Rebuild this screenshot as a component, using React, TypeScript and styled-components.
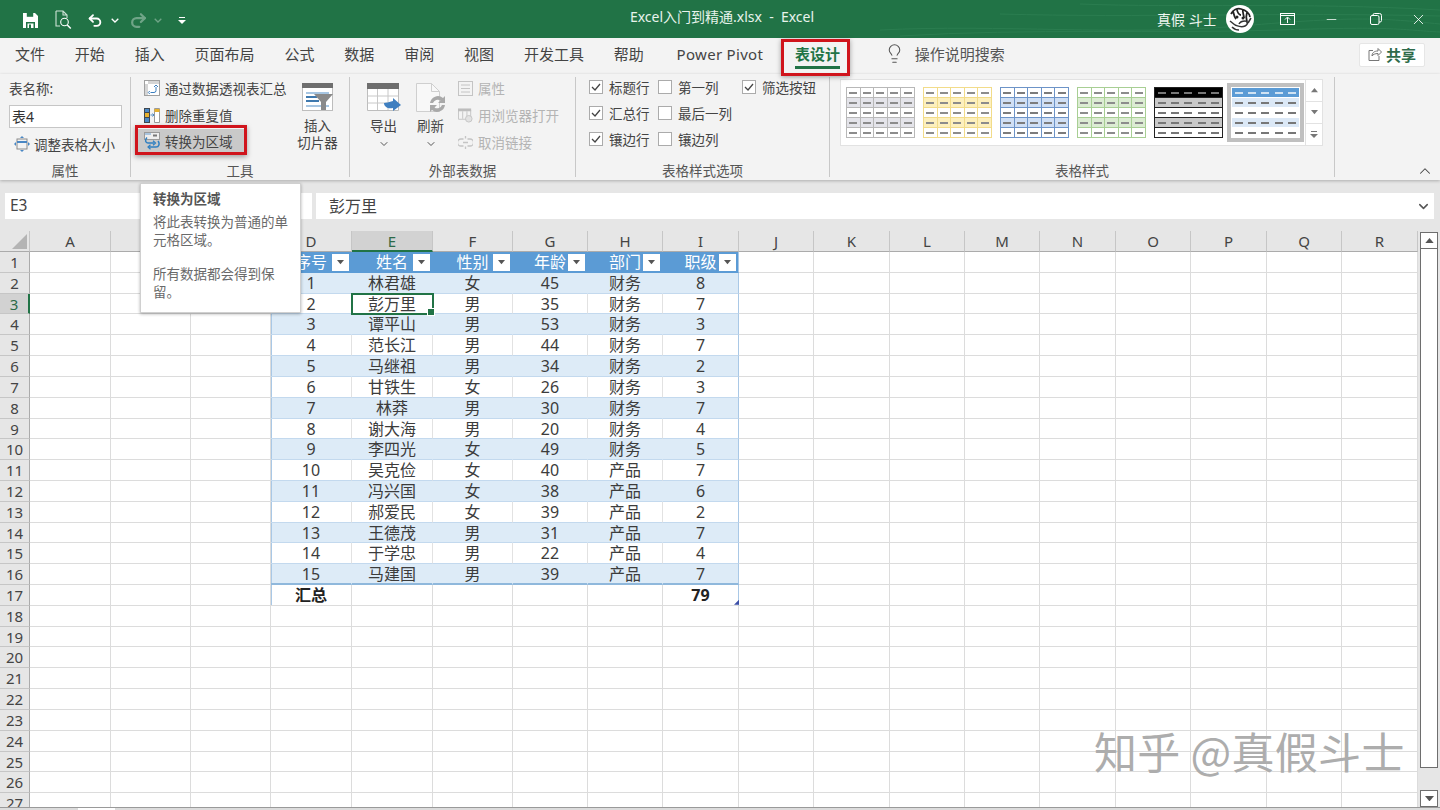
import React from "react";
import styled, { createGlobalStyle } from "styled-components";
import { Lightbulb, Undo2, Redo2, X, Minus, ChevronDown, ChevronUp } from "lucide-react";

const GlobalStyle = createGlobalStyle`
  html, body { margin: 0; padding: 0; background: #fff; }
  body { font-family: "Noto Sans", "Noto Sans CJK SC", sans-serif; color: #444; }
  * { box-sizing: border-box; }
`;

const GREEN = "#217346";
const RED = "#d0141c";

const Page = styled.div`
  position: relative;
  width: 1440px;
  height: 810px;
  overflow: hidden;
  display: flex;
  flex-direction: column;
`;

/* ---------- title bar ---------- */
const TitleBar = styled.header`
  position: relative;
  height: 38px;
  flex: none;
  background: ${GREEN};
  display: grid;
  grid-template-columns: 1fr auto 1fr;
  align-items: center;
  color: #fff;
`;
const TitleLines = styled.svg`
  position: absolute;
  right: 0;
  top: 0;
`;
const Qat = styled.div`
  display: flex;
  align-items: center;
  padding-left: 22px;
  padding-top: 2px;
  position: relative;
`;
const QatSlot = styled.span<{ $w: number; $dim?: boolean; $ml?: number }>`
  width: ${(p) => p.$w}px;
  margin-left: ${(p) => p.$ml ?? 0}px;
  display: flex;
  align-items: center;
  justify-content: center;
  opacity: ${(p) => (p.$dim ? 0.35 : 1)};
`;
const Title = styled.div`
  font-size: 14px;
  color: #e8f3ec;
  white-space: pre;
  position: relative;
  padding-bottom: 6px;
  margin-left: 4px;
`;
const WinArea = styled.div`
  display: flex;
  justify-content: flex-end;
  align-items: center;
  position: relative;
`;
const UserName = styled.span`
  font-size: 14px;
  color: #eef6f0;
  width: 69px;
  white-space: pre;
`;
const WinSlot = styled.span<{ $w: number }>`
  width: ${(p) => p.$w}px;
  display: flex;
  justify-content: center;
  align-items: center;
`;

/* ---------- tabs ---------- */
const TabBar = styled.nav`
  height: 36px;
  flex: none;
  background: #f3f3f3;
  display: flex;
  align-items: stretch;
  gap: 29.85px;
  padding-left: 15px;
`;
const Tab = styled.div<{ $active?: boolean; $latin?: boolean }>`
  position: relative;
  font-size: 15px;
  font-weight: ${(p) => (p.$active ? 700 : 400)};
  color: ${(p) => (p.$active ? GREEN : "#444")};
  display: flex;
  align-items: center;
  padding-bottom: 5px;
  letter-spacing: ${(p) => (p.$latin ? "0.3px" : "0")};
  margin-left: ${(p) => (p.$latin ? "3px" : p.$active ? "2px" : "0")};
  ${(p) =>
    p.$active
      ? `
    &::before { content: ""; position: absolute; left: 0; right: 0; bottom: 5px; height: 3px; background: ${GREEN}; }
    &::after { content: ""; position: absolute; left: -14px; right: -10px; top: 1px; bottom: -2px; border: 3px solid ${RED}; box-shadow: 0 1px 5px rgba(0,0,0,.35); z-index: 3; }
  `
      : ""}
`;
const Search = styled.div`
  display: flex;
  align-items: center;
  gap: 10px;
  font-size: 15px;
  color: #555;
  margin-left: 14px;
  padding-bottom: 5px;
`;
const ShareButton = styled.div`
  margin: 5px 15px 7px auto;
  width: 66px;
  background: #fff;
  border: 1px solid #e6e6e6;
  border-radius: 2px;
  display: flex;
  align-items: center;
  justify-content: center;
  gap: 4px;
  font-size: 15px;
  font-weight: 700;
  color: #2f6b4b;
  padding-bottom: 2px;
`;

/* ---------- ribbon ---------- */
const Ribbon = styled.section`
  position: relative;
  height: 106px;
  flex: none;
  background: #f3f3f3;
  display: flex;
  box-shadow: 0 1px 3px rgba(0, 0, 0, 0.25);
  z-index: 2;
`;
const Group = styled.div<{ $w: number }>`
  width: ${(p) => p.$w}px;
  flex: none;
  display: flex;
  flex-direction: column;
  position: relative;
  &::after {
    content: "";
    position: absolute;
    right: 0;
    top: 3px;
    bottom: 3px;
    width: 1px;
    background: #c8c8c8;
  }
`;
const GroupBody = styled.div<{ $pl?: number; $pt?: number }>`
  flex: 1;
  display: flex;
  min-height: 0;
  padding-left: ${(p) => p.$pl ?? 0}px;
  padding-top: ${(p) => p.$pt ?? 0}px;
`;
const GroupLabel = styled.div`
  height: 18px;
  flex: none;
  font-size: 13.5px;
  line-height: 18px;
  text-align: center;
  color: #555;
  padding-right: 1px;
`;
const PropsColumn = styled.div`
  display: flex;
  flex-direction: column;
  font-size: 13.5px;
  color: #444;
  padding-left: 9px;
`;
const FieldLabel = styled.div`
  height: 31px;
  line-height: 30px;
`;
const NameInput = styled.div`
  width: 113px;
  height: 23px;
  background: #fff;
  border: 1px solid #c6c6c6;
  font-size: 14px;
  line-height: 21px;
  padding-left: 2px;
  color: #333;
`;
const SmallRow = styled.div<{ $disabled?: boolean; $boxed?: boolean }>`
  position: relative;
  height: 27px;
  display: flex;
  align-items: center;
  gap: 5px;
  font-size: 13.5px;
  white-space: nowrap;
  color: ${(p) => (p.$disabled ? "#b4b4b4" : "#444")};
  svg { flex: none; }
  ${(p) =>
    p.$boxed
      ? `
    background: #c9c9c9;
    margin-left: -9px;
    padding-left: 9px;
    width: 112px;
    height: 25px;
    &::after { content: ""; position: absolute; inset: -3.5px 0 -1.5px 0; border: 3px solid ${RED}; box-shadow: 0 2px 5px rgba(0,0,0,.35); }
  `
      : ""}
`;
const ResizeRow = styled(SmallRow)`
  margin-left: 5px;
  margin-top: 2.5px;
  gap: 4px;
`;
const ToolColumn = styled.div<{ $w: number; $ml?: number }>`
  width: ${(p) => p.$w}px;
  margin-left: ${(p) => p.$ml ?? 0}px;
  flex: none;
  display: flex;
  flex-direction: column;
`;
const LargeButton = styled.div`
  width: 47px;
  flex: none;
  display: flex;
  flex-direction: column;
  align-items: center;
  padding-top: 8.5px;
  font-size: 13.5px;
  line-height: 17px;
  text-align: center;
  color: #444;
  white-space: pre-line;
`;
const LargeIcon = styled.div`
  height: 34.5px;
  display: flex;
  align-items: flex-start;
`;
const MoreChevron = styled(ChevronDown)`
  margin-top: 3px;
`;
const CheckGrid = styled.div`
  display: grid;
  grid-template-columns: 69px 84px 80px;
  grid-auto-rows: 26px;
  padding-left: 13px;
`;
const CheckItem = styled.div`
  display: flex;
  align-items: center;
  gap: 6px;
  font-size: 13.5px;
  color: #444;
  white-space: nowrap;
`;
const CheckBox = styled.span`
  width: 14px;
  height: 14px;
  background: #fff;
  border: 1px solid #ababab;
  display: flex;
  align-items: center;
  justify-content: center;
  flex: none;
`;
const Gallery = styled.div`
  margin: 5px 0 0 10px;
  width: 466px;
  height: 67px;
  background: #fff;
  border: 1px solid #e2e2e2;
  display: flex;
  align-items: center;
  gap: 8px;
  padding-left: 5px;
`;
const Frame = styled.div<{ $selected?: boolean }>`
  flex: none;
  padding: ${(p) => (p.$selected ? "4px" : "0")};
  margin-left: ${(p) => (p.$selected ? "-4px" : "0")};
  background: ${(p) => (p.$selected ? "#c0c0c0" : "transparent")};
`;
const Thumb = styled.div<{ $line: string; $vline: boolean }>`
  width: 69px;
  height: 51px;
  display: grid;
  grid-template-columns: repeat(5, 1fr);
  grid-template-rows: repeat(5, 1fr);
  border: 1px solid ${(p) => p.$line};
  background: ${(p) => p.$line};
  gap: ${(p) => (p.$vline ? "1px" : "1px 0")};
`;
const ThumbCell = styled.span<{ $bg: string }>`
  background: ${(p) => p.$bg};
  display: flex;
  align-items: center;
  justify-content: center;
`;
const Dash = styled.i<{ $c: string }>`
  display: block;
  width: 8px;
  height: 2px;
  background: ${(p) => p.$c};
`;
const GalleryScroll = styled.div`
  display: flex;
  flex-direction: column;
  margin: 5px 0 0 0;
  width: 17px;
  height: 67px;
  flex: none;
`;
const ScrollStep = styled.div`
  flex: 1;
  background: #fff;
  border: 1px solid #e2e2e2;
  border-left: none;
  margin-top: -1px;
  display: flex;
  align-items: center;
  justify-content: center;
  &:first-child { margin-top: 0; }
`;
const Collapse = styled.div`
  flex: 1;
  display: flex;
  justify-content: flex-end;
  align-items: flex-end;
  padding: 0 6px 0 0;
`;

/* ---------- formula bar ---------- */
const FormulaBar = styled.div`
  height: 51px;
  flex: none;
  background: #e6e6e6;
  display: flex;
  align-items: center;
  padding: 1px 6px 0 5px;
  gap: 4px;
`;
const NameBox = styled.div`
  width: 307px;
  height: 26px;
  background: #fff;
  font-size: 15.5px;
  line-height: 25px;
  padding-left: 5px;
  color: #444;
`;
const FormulaInput = styled.div`
  flex: 1;
  height: 26px;
  background: #fff;
  font-size: 16px;
  line-height: 25px;
  padding: 0 3px 0 13px;
  color: #444;
  display: flex;
  justify-content: space-between;
  align-items: center;
`;

/* ---------- sheet ---------- */
const SheetWrap = styled.div`
  height: 576px;
  flex: none;
  display: flex;
  background: #fff;
  overflow: hidden;
`;
const SheetGrid = styled.div`
  display: grid;
  grid-template-columns: 30px 81px 80px 80px 81px 81px 80px 75px 75px 76px 75px 76px 75px 75px 76px 75px 76px 75px 76px;
  grid-template-rows: 21px repeat(27, 20.82px);
  width: 1418px;
  flex: none;
`;
const Corner = styled.div`
  position: relative;
  background: #e6e6e6;
  border-right: 1px solid #c6c6c6;
  border-bottom: 1px solid #ababab;
  &::after {
    content: "";
    position: absolute;
    right: 2px;
    bottom: 2px;
    width: 15px;
    height: 15px;
    background: #b4b4b4;
    clip-path: polygon(100% 0, 100% 100%, 0 100%);
  }
`;
const ColHead = styled.div<{ $on?: boolean }>`
  background: ${(p) => (p.$on ? "#d2d2d2" : "#e6e6e6")};
  border-right: 1px solid #c6c6c6;
  border-bottom: ${(p) => (p.$on ? `2px solid ${GREEN}` : "1px solid #ababab")};
  font-size: 15px;
  line-height: 21px;
  text-align: center;
  color: ${(p) => (p.$on ? "#2c6a48" : "#444")};
`;
const RowHead = styled.div<{ $on?: boolean }>`
  background: ${(p) => (p.$on ? "#d2d2d2" : "#e6e6e6")};
  border-right: ${(p) => (p.$on ? `2px solid ${GREEN}` : "1px solid #ababab")};
  border-bottom: 1px solid #c6c6c6;
  font-size: 15px;
  line-height: 20px;
  text-align: center;
  color: ${(p) => (p.$on ? "#2c6a48" : "#444")};
`;
const Cell = styled.div<{ $bg?: string; $lineR?: string; $lineB?: string; $lineL?: string; $bold?: boolean; $head?: boolean; $sel?: boolean; $thick?: boolean }>`
  position: relative;
  background: ${(p) => p.$bg ?? "#fff"};
  border-right: 1px solid ${(p) => p.$lineR ?? "#dcdcdc"};
  border-bottom: ${(p) => (p.$thick ? 2 : 1)}px solid ${(p) => p.$lineB ?? "#dcdcdc"};
  ${(p) => (p.$lineL ? `box-shadow: inset 1px 0 0 ${p.$lineL};` : "")}
  font-size: 16px;
  font-weight: ${(p) => (p.$bold ? 700 : 400)};
  color: ${(p) => (p.$head ? "#fff" : p.$bold ? "#222" : "#3c3c3c")};
  text-align: center;
  line-height: 20px;
  white-space: nowrap;
  ${(p) =>
    p.$sel
      ? `
    outline: 2px solid ${GREEN};
    outline-offset: -1px;
    z-index: 1;
    &::after { content: ""; position: absolute; right: -3px; bottom: -3px; width: 6px; height: 6px; background: ${GREEN}; border: 1px solid #fff; }
  `
      : ""}
`;
const FilterButton = styled.span`
  position: absolute;
  right: 2px;
  top: 2px;
  width: 17px;
  height: 17px;
  background: #fff;
  display: flex;
  align-items: center;
  justify-content: center;
`;
const ResizeHandle = styled.span`
  position: absolute;
  right: -1px;
  bottom: 0;
  width: 5px;
  height: 5px;
  background: #3c4fa8;
  clip-path: polygon(100% 0, 100% 100%, 0 100%);
`;

/* ---------- scrollbars ---------- */
const VScroll = styled.div`
  flex: 1;
  background: #e6e6e6;
  display: flex;
  flex-direction: column;
  padding: 1px 2px 0;
`;
const VScrollButton = styled.div`
  height: 17px;
  flex: none;
  background: #fff;
  border: 1px solid #6e6e6e;
  display: flex;
  align-items: center;
  justify-content: center;
`;
const VThumb = styled.div`
  height: 520px;
  flex: none;
  margin-top: -1px;
  background: #fff;
  border: 1px solid #6e6e6e;
`;
const VGap = styled.div`
  flex: 1;
`;
const BottomStrip = styled.div`
  flex: 1;
  display: flex;
  background: #dcdcdc;
  border-top: 1px solid #9a9a9a;
`;
const StripGap = styled.div`
  width: 37px;
  margin-left: 78px;
  background: #fff;
`;

/* ---------- overlays ---------- */
const Tooltip = styled.aside`
  position: absolute;
  left: 140px;
  top: 183px;
  width: 161px;
  height: 130px;
  background: #fff;
  border: 1px solid #d0d0d0;
  box-shadow: 0 1px 3px rgba(0, 0, 0, 0.3);
  padding: 6px 8px 0 12px;
  z-index: 5;
`;
const TooltipTitle = styled.div`
  font-size: 13.5px;
  font-weight: 700;
  color: #555;
  line-height: 18px;
  margin-bottom: 5px;
`;
const TooltipText = styled.p`
  margin: 0 0 16px;
  font-size: 13.5px;
  line-height: 18px;
  color: #6a6a6a;
`;
const Watermark = styled.div`
  position: absolute;
  left: 1094px;
  top: 721px;
  font-size: 43px;
  line-height: 58px;
  letter-spacing: 0.3px;
  color: #adadad;
  white-space: pre;
  z-index: 4;
  font-family: "Noto Sans CJK SC", sans-serif;
`;

/* ---------- icons ---------- */
const Tri = ({ c = "#555", s = 7 }: { c?: string; s?: number }) => (
  <svg width={s} height={s * 0.6} viewBox="0 0 10 6">
    <path d="M0 0h10L5 6z" fill={c} />
  </svg>
);
const TriUp = ({ c = "#555", s = 7 }: { c?: string; s?: number }) => (
  <svg width={s} height={s * 0.6} viewBox="0 0 10 6">
    <path d="M0 6h10L5 0z" fill={c} />
  </svg>
);
const SaveIcon = () => (
  <svg width="15" height="15" viewBox="0 0 15 15">
    <path d="M0 0h12l3 3v12H0z" fill="#fff" />
    <path d="M3.8 0h6.4v3.8H3.8z" fill={GREEN} />
    <path d="M3 9h9v6H3z" fill={GREEN} />
    <path d="M4.5 10.5h6V15h-6z" fill="#fff" />
    <path d="M6 11.5h2V15H6z" fill={GREEN} />
  </svg>
);
const PreviewIcon = () => (
  <svg width="18" height="20" viewBox="0 0 18 20" fill="none" stroke="#cfe3d7" strokeWidth="1.1">
    <path d="M1 1h7l4 4v3M8 1v4h4M1 1v15h4" />
    <circle cx="9.5" cy="12" r="3.8" stroke="#fff" />
    <path d="M12.3 15l3.500 3.500" stroke="#fff" strokeWidth="1.5" />
  </svg>
);
const MiniChevron = ({ dim }: { dim?: boolean }) => (
  <svg width="8" height="5" viewBox="0 0 8 5" fill="none" stroke="#fff" strokeWidth="1.3" opacity={dim ? 0.35 : 1}>
    <path d="M.7.7L4 4l3.300-3.300" />
  </svg>
);
const CustomizeIcon = ({ c = "#fff" }: { c?: string }) => (
  <svg width="8" height="7" viewBox="0 0 8 7">
    <path d="M1 0h6v1H1zM0 3h8L4 7z" fill={c} />
  </svg>
);
const Avatar = () => (
  <svg width="28" height="28" viewBox="0 0 28 28" fill="none">
    <circle cx="14" cy="14" r="14" fill="#fff" />
    <path d="M5 9c2-4 6-6 10-5s8 3 9 8M7 6c1 3 1 6 3 8M11 4c0 3 2 6 4 6M17 4c-1 3 1 6 1 9M21 7c-1 3-1 6 0 10" stroke="#222" strokeWidth="1.8" />
    <circle cx="11" cy="12" r="1.5" fill="#222" />
    <circle cx="17" cy="13" r="1.5" fill="#222" />
    <path d="M4 16l5 4M9 20c3 1 6 3 10 1s2-5 0-5-5 1-6 3M6 22c2 2 4 3 7 3M22 18l3-5" stroke="#333" strokeWidth="1.5" />
  </svg>
);
const RibbonDisplayIcon = () => (
  <svg width="15" height="12" viewBox="0 0 15 12" fill="none" stroke="#fff" strokeWidth="1">
    <rect x=".5" y=".5" width="14" height="11" />
    <path d="M.5 2.500h14M7.500 10V4.500M5 6.500l2.500-2.500L10 6.500" />
  </svg>
);
const RestoreIcon = () => (
  <svg width="12" height="12" viewBox="0 0 12 12" fill="none" stroke="#fff" strokeWidth="1">
    <rect x=".5" y="2.5" width="8.5" height="9" rx="1.5" />
    <path d="M3 2.500V2A1.500 1.500 0 0 1 4.500.5h5A2 2 0 0 1 11.500 2.500v5A1.500 1.500 0 0 1 10 9H9" />
  </svg>
);
const ShareIcon = () => (
  <svg width="14" height="14" viewBox="0 0 14 14" fill="none" stroke="#777" strokeWidth="1">
    <path d="M5 3.500H1v10h10V9" />
    <path d="M4 9c0-3 2-5 6-5V1.500L13.500 5 10 8.500V6.500c-3 0-5 1-6 2.500z" />
  </svg>
);
const ResizeTableIcon = () => (
  <svg width="16" height="16" viewBox="0 0 16 16" fill="none">
    <rect x="3" y="3" width="10" height="10" stroke="#8a8a8a" />
    <path d="M3 6h10" stroke="#4a87c4" strokeWidth="2" />
    <path d="M8 0l2 2H6zM8 16l2-2H6zM0 8l2-2v4zM16 8l-2-2v4z" fill="#4a87c4" />
  </svg>
);
const PivotSummaryIcon = () => (
  <svg width="16" height="16" viewBox="0 0 16 16" fill="none">
    <rect x=".5" y=".5" width="15" height="15" fill="#fff" stroke="#a0a0a0" />
    <path d="M1 4h3v11H1zM4 1h11v3H4z" fill="#d5d5d5" />
    <path d="M12 7v3.500a2 2 0 0 1-2 2H6.500M5.800 11l-1.500 1.500 1.500 1.500M10 7l2-2 2 2" stroke="#3a7ebf" />
  </svg>
);
const DedupeIcon = () => (
  <svg width="16" height="15" viewBox="0 0 16 15">
    <path d="M0 0h6v15H0z" fill="#3f4850" />
    <path d="M1 5h4v4H1z" fill="#e7b12f" />
    <path d="M1 10h4v4H1z" fill="#4a87c4" />
    <path d="M1 1h4v3H1z" fill="#4a87c4" />
    <path d="M6.500 7h3M8.500 5.500l1.500 1.500-1.500 1.500" stroke="#4a87c4" fill="none" />
    <path d="M10.500.5h5v14h-5z" fill="#fff" stroke="#9a9a9a" />
    <path d="M10.500 1h5v3h-5z" fill="#e7b12f" />
  </svg>
);
const ConvertIcon = () => (
  <svg width="16" height="18" viewBox="0 0 16 18" fill="none">
    <rect x=".5" y=".5" width="15" height="7" fill="#eeeeee" stroke="#9a9a9a" />
    <path d="M9 2.500h4v2H9z" fill="#777" />
    <path d="M1 1h6v2H1z" fill="#a9c4de" />
    <path d="M3 5.500C.5 8 1.500 11 4 11h6" stroke="#2f7fc1" strokeWidth="1.5" />
    <path d="M9 8.800l2.500 2.200L9 13.200" stroke="#2f7fc1" strokeWidth="1.2" />
    <path d="M14 9c2 2.500 1 6-2 6H5" stroke="#2f7fc1" strokeWidth="1.5" />
    <path d="M6.500 12.800L4 15l2.500 2.200" stroke="#2f7fc1" strokeWidth="1.2" />
  </svg>
);
const SlicerIcon = () => (
  <svg width="31" height="28" viewBox="0 0 31 28">
    <rect x=".5" y=".5" width="30" height="27" fill="#fff" stroke="#bdbdbd" />
    <path d="M0 0h31v5H0z" fill="#6e6e6e" />
    <path d="M4 9h23v2H4z" fill="#a7c6e2" />
    <path d="M4 13h11v2H4zM4 17h13v2H4z" fill="#3f79ae" />
    <path d="M4 22h23v2H4z" fill="#a7c6e2" />
    <path d="M12 11h19l-7 8v8h-5v-8z" fill="#8a8a8a" />
  </svg>
);
const ExportIcon = () => (
  <svg width="34" height="29" viewBox="0 0 34 29">
    <path d="M.5.5h31v27H.5z" fill="#fff" stroke="#bdbdbd" />
    <path d="M0 0h32v6H0z" fill="#6e6e6e" />
    <path d="M.5 13h31M.5 20h31M10.500 6v21M21 6v21" stroke="#c8c8c8" />
    <path d="M17 20c0 4 4 6 9 5v3l8-6-8-7v3c-4 1-7 2-9 2z" fill="#3f7fc0" />
  </svg>
);
const RefreshIcon = () => (
  <svg width="31" height="30" viewBox="0 0 31 30" fill="none">
    <path d="M1.500.5h15l8 8v20h-23z" fill="#f8f8f8" stroke="#cfcfcf" />
    <path d="M16.500.5v8h8" stroke="#cfcfcf" />
    <path d="M15 20a8 8 0 0 1 13-5l2-2v7h-7l2.500-2.500A5 5 0 0 0 18 20z M30 22a8 8 0 0 1-13 5l-2 2v-7h7l-2.500 2.500A5 5 0 0 0 27 22z" fill="#a9a9a9" />
  </svg>
);
const PropIcon = () => (
  <svg width="15" height="15" viewBox="0 0 15 15" fill="none" stroke="#c4c4c4">
    <rect x=".5" y=".5" width="14" height="14" />
    <path d="M3 4h9M3 7.500h9M3 11h9" />
  </svg>
);
const BrowserIcon = () => (
  <svg width="15" height="15" viewBox="0 0 16 15" fill="none" stroke="#c4c4c4">
    <path d="M.5 1.500h13v10H.5zM5 3v8M9.500 3v8" />
    <path d="M0 0h14v3H0z" fill="#bdbdbd" stroke="none" />
    <circle cx="11.500" cy="11" r="3.500" fill="#e2e2e2" />
  </svg>
);
const UnlinkIcon = () => (
  <svg width="15" height="13" viewBox="0 0 15 13" fill="none" stroke="#c4c4c4" strokeWidth="1.3">
    <path d="M5.500 3H3a3.400 3.400 0 0 0 0 7h2.500M9.500 3H12a3.400 3.400 0 0 1 0 7H9.500M7.500 0v2.500M7.500 10.500V13M5 6.500h5" />
  </svg>
);
const Check = () => (
  <svg width="10" height="8" viewBox="0 0 10 8" fill="none" stroke="#444" strokeWidth="1.3">
    <path d="M1 4l3 3 5-6" />
  </svg>
);

/* ---------- data ---------- */
const TABS = ["文件", "开始", "插入", "页面布局", "公式", "数据", "审阅", "视图", "开发工具", "帮助"];
const COLS = "ABCDEFGHIJKLMNOPQR".split("");
const PEOPLE: [string, string, string, string, string, string][] = [
  ["1", "林君雄", "女", "45", "财务", "8"],
  ["2", "彭万里", "男", "35", "财务", "7"],
  ["3", "谭平山", "男", "53", "财务", "3"],
  ["4", "范长江", "男", "44", "财务", "7"],
  ["5", "马继祖", "男", "34", "财务", "2"],
  ["6", "甘铁生", "女", "26", "财务", "3"],
  ["7", "林莽", "男", "30", "财务", "7"],
  ["8", "谢大海", "男", "20", "财务", "4"],
  ["9", "李四光", "女", "49", "财务", "5"],
  ["10", "吴克俭", "女", "40", "产品", "7"],
  ["11", "冯兴国", "女", "38", "产品", "6"],
  ["12", "郝爱民", "女", "39", "产品", "2"],
  ["13", "王德茂", "男", "31", "产品", "7"],
  ["14", "于学忠", "男", "22", "产品", "4"],
  ["15", "马建国", "男", "39", "产品", "7"],
];
const HEADS = ["序号", "姓名", "性别", "年龄", "部门", "职级"];
const THUMBS = [
  { line: "#b8b8b8", head: "#fff", band: "#e4e4ea", dash: "#8c8c8c", vline: true },
  { line: "#f2dc8a", head: "#fff", band: "#fdf0bd", dash: "#8c8c8c", vline: true },
  { line: "#6d94c8", head: "#fff", band: "#cfdff5", dash: "#7c7c7c", vline: true },
  { line: "#a8cf94", head: "#fff", band: "#dcecd3", dash: "#8c8c8c", vline: true },
  { line: "#222", head: "#000", band: "#c9c9c9", dash: "#777", vline: false },
  { line: "#fff", head: "#5b9bd5", band: "#dbe8f6", dash: "#777", vline: false, selected: true },
];

function tableCell(row: number, colIndex: number) {
  const c = colIndex - 3;
  if (c < 0 || c > 5) return null;
  const lineL = c === 0 ? "#a9c8e6" : undefined;
  const edge = c === 5 ? "#a9c8e6" : undefined;
  if (row === 1) {
    return (
      <Cell key={colIndex} $bg="#5b9bd5" $lineR={edge ?? "#5b9bd5"} $lineB="#5b9bd5" $head>
        {HEADS[c]}
        <FilterButton>
          <Tri />
        </FilterButton>
      </Cell>
    );
  }
  if (row >= 2 && row <= 16) {
    const striped = row % 2 === 0;
    return (
      <Cell
        key={colIndex}
        $bg={striped ? "#ddebf7" : "#fff"}
        $lineR={edge ?? (striped ? "#ddebf7" : "#e2e2e2")}
        $lineB={row === 16 ? "#8fb8dc" : "#c3d9ee"}
        $thick={row === 16}
        $lineL={lineL}
        $sel={row === 3 && c === 1}
      >
        {PEOPLE[row - 2][c]}
      </Cell>
    );
  }
  if (row === 17) {
    return (
      <Cell key={colIndex} $lineR={edge} $lineL={lineL} $bold>
        {c === 0 ? "汇总" : c === 5 ? "79" : ""}
        {c === 5 && <ResizeHandle />}
      </Cell>
    );
  }
  return null;
}

export default function App() {
  const rows = Array.from({ length: 27 }, (_, i) => i + 1);
  return (
    <Page>
      <GlobalStyle />
      <TitleBar>
        <TitleLines width="560" height="38" viewBox="0 0 560 38" fill="none" stroke="#2b7d50" strokeWidth="1">
          <path d="M0 30C120 24 240 36 360 26S500 18 560 24" />
          <path d="M20 36C150 28 280 34 400 30S520 30 560 32" />
          <path d="M200 4C300 8 420 2 560 10" />
          <path d="M120 14C260 18 400 12 560 16" />
        </TitleLines>
        <Qat>
          <QatSlot $w={16}><SaveIcon /></QatSlot>
          <QatSlot $w={52}><PreviewIcon /></QatSlot>
          <QatSlot $w={16} $ml={-3}><Undo2 size={19} color="#fff" strokeWidth={2.8} /></QatSlot>
          <QatSlot $w={24}><MiniChevron /></QatSlot>
          <QatSlot $w={22} $dim><Redo2 size={19} color="#fff" strokeWidth={2.8} /></QatSlot>
          <QatSlot $w={17}><MiniChevron dim /></QatSlot>
          <QatSlot $w={32}><CustomizeIcon /></QatSlot>
        </Qat>
        <Title>{"Excel入门到精通.xlsx  -  Excel"}</Title>
        <WinArea>
          <UserName>{"真假 斗士"}</UserName>
          <Avatar />
          <WinSlot $w={66}><RibbonDisplayIcon /></WinSlot>
          <WinSlot $w={23}><Minus size={15} color="#fff" strokeWidth={1.2} /></WinSlot>
          <WinSlot $w={65}><RestoreIcon /></WinSlot>
          <WinSlot $w={20}><X size={17} color="#fff" strokeWidth={1.2} /></WinSlot>
          <WinSlot $w={12} />
        </WinArea>
      </TitleBar>

      <TabBar>
        {TABS.map((t) => (
          <Tab key={t}>{t}</Tab>
        ))}
        <Tab $latin>Power Pivot</Tab>
        <Tab $active>表设计</Tab>
        <Search>
          <Lightbulb size={21} color="#555" strokeWidth={1.2} />
          操作说明搜索
        </Search>
        <ShareButton>
          <ShareIcon />
          共享
        </ShareButton>
      </TabBar>

      <Ribbon>
        <Group $w={131}>
          <GroupBody>
            <PropsColumn>
              <FieldLabel>表名称:</FieldLabel>
              <NameInput>表4</NameInput>
              <ResizeRow>
                <ResizeTableIcon />
                调整表格大小
              </ResizeRow>
            </PropsColumn>
          </GroupBody>
          <GroupLabel>属性</GroupLabel>
        </Group>

        <Group $w={219}>
          <GroupBody $pl={13} $pt={0.5}>
            <ToolColumn $w={150}>
              <SmallRow><PivotSummaryIcon />通过数据透视表汇总</SmallRow>
              <SmallRow><DedupeIcon />删除重复值</SmallRow>
              <SmallRow $boxed><ConvertIcon />转换为区域</SmallRow>
            </ToolColumn>
            <LargeButton>
              <LargeIcon><SlicerIcon /></LargeIcon>
              {"插入\n切片器"}
            </LargeButton>
          </GroupBody>
          <GroupLabel>工具</GroupLabel>
        </Group>

        <Group $w={226}>
          <GroupBody $pl={10} $pt={0.5}>
            <LargeButton>
              <LargeIcon><ExportIcon /></LargeIcon>
              导出
              <MoreChevron size={12} color="#555" />
            </LargeButton>
            <LargeButton>
              <LargeIcon><RefreshIcon /></LargeIcon>
              刷新
              <MoreChevron size={12} color="#555" />
            </LargeButton>
            <ToolColumn $w={110} $ml={4}>
              <SmallRow $disabled><PropIcon />属性</SmallRow>
              <SmallRow $disabled><BrowserIcon />用浏览器打开</SmallRow>
              <SmallRow $disabled><UnlinkIcon />取消链接</SmallRow>
            </ToolColumn>
          </GroupBody>
          <GroupLabel>外部表数据</GroupLabel>
        </Group>

        <Group $w={254}>
          <GroupBody>
            <CheckGrid>
              <CheckItem><CheckBox><Check /></CheckBox>标题行</CheckItem>
              <CheckItem><CheckBox />第一列</CheckItem>
              <CheckItem><CheckBox><Check /></CheckBox>筛选按钮</CheckItem>
              <CheckItem><CheckBox><Check /></CheckBox>汇总行</CheckItem>
              <CheckItem><CheckBox />最后一列</CheckItem>
              <span />
              <CheckItem><CheckBox><Check /></CheckBox>镶边行</CheckItem>
              <CheckItem><CheckBox />镶边列</CheckItem>
            </CheckGrid>
          </GroupBody>
          <GroupLabel>表格样式选项</GroupLabel>
        </Group>

        <Group $w={505}>
          <GroupBody>
            <Gallery>
              {THUMBS.map((t) => (
                <Frame key={t.line + t.head} $selected={t.selected}>
                  <Thumb $line={t.line} $vline={t.vline}>
                    {Array.from({ length: 25 }, (_, i) => {
                      const r = Math.floor(i / 5);
                      const bg = r === 0 ? t.head : r % 2 === 1 ? t.band : "#fff";
                      const d = r === 0 && t.selected ? "#cfe2f3" : t.dash;
                      return (
                        <ThumbCell key={i} $bg={bg}>
                          <Dash $c={d} />
                        </ThumbCell>
                      );
                    })}
                  </Thumb>
                </Frame>
              ))}
            </Gallery>
            <GalleryScroll>
              <ScrollStep><TriUp c="#777" /></ScrollStep>
              <ScrollStep><Tri c="#777" /></ScrollStep>
              <ScrollStep><CustomizeIcon c="#777" /></ScrollStep>
            </GalleryScroll>
          </GroupBody>
          <GroupLabel>表格样式</GroupLabel>
        </Group>

        <Collapse>
          <ChevronUp size={18} color="#444" strokeWidth={1.4} />
        </Collapse>
      </Ribbon>

      <FormulaBar>
        <NameBox>E3</NameBox>
        <FormulaInput>
          彭万里
          <ChevronDown size={15} color="#555" strokeWidth={2.4} />
        </FormulaInput>
      </FormulaBar>

      <SheetWrap>
        <SheetGrid>
          <Corner />
          {COLS.map((c) => (
            <ColHead key={c} $on={c === "E"}>{c}</ColHead>
          ))}
          {rows.map((r) => (
            <React.Fragment key={r}>
              <RowHead $on={r === 3}>{r}</RowHead>
              {COLS.map((_, i) => tableCell(r, i) ?? <Cell key={i} />)}
            </React.Fragment>
          ))}
        </SheetGrid>
        <VScroll>
          <VScrollButton><TriUp c="#555" s={9} /></VScrollButton>
          <VThumb />
          <VGap />
          <VScrollButton><Tri c="#555" s={9} /></VScrollButton>
        </VScroll>
      </SheetWrap>
      <BottomStrip>
        <StripGap />
      </BottomStrip>

      <Tooltip>
        <TooltipTitle>转换为区域</TooltipTitle>
        <TooltipText>将此表转换为普通的单元格区域。</TooltipText>
        <TooltipText>所有数据都会得到保留。</TooltipText>
      </Tooltip>
      <Watermark>{"知乎 @真假斗士"}</Watermark>
    </Page>
  );
}
